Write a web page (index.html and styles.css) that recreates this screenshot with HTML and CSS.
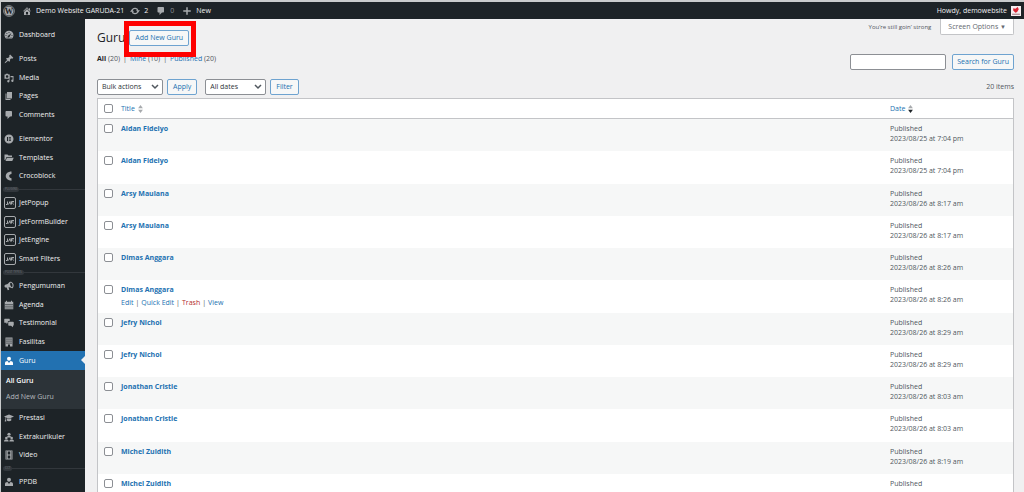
FILE: index.html
```html
<!DOCTYPE html>
<html lang="en">
<head>
  <meta charset="UTF-8" />
  <meta name="viewport" content="width=device-width, initial-scale=1.0"/>
  <title>Guru - Demo Website GARUDA-21</title>
  <link rel="stylesheet" href="styles.css">
</head>
<body>
  <svg class="sprite" aria-hidden="true">
    <symbol id="i-home" viewBox="0 0 20 20"><path d="M16 8.500l1.530 1.530-1.060 1.060L10 4.600l-6.470 6.490-1.060-1.060L10 2.500l4 4v-2h2v4zm-6-2.460l6 5.990V18H4v-5.970zM12 17v-5H8v5h4z"/></symbol>
    <symbol id="i-update" viewBox="0 0 20 20"><path d="M4.500 8a6 6 0 0 1 11.300 1.200M15.500 12a6 6 0 0 1-11.300-1.200" fill="none" stroke="currentColor" stroke-width="2.500"/><path d="M12 8.500h8L16 13.500zM0 11.500h8L4 6.500z"/></symbol>
    <symbol id="i-comment" viewBox="0 0 20 20"><path d="M5 2h9c1.100 0 2 .9 2 2v7c0 1.100-.9 2-2 2h-2l-5 5v-5H5c-1.100 0-2-.9-2-2V4c0-1.100.9-2 2-2z"/></symbol>
    <symbol id="i-plus" viewBox="0 0 20 20"><path d="M8.500 2.500h3v6h6v3h-6v6h-3v-6h-6v-3h6z"/></symbol>
    <symbol id="i-dashboard" viewBox="0 0 20 20"><path fill-rule="evenodd" d="M3.800 17A9 9 0 1 1 16.200 17zM10 4a1 1 0 1 0 0 2 1 1 0 0 0 0-2zM5.800 6a1 1 0 1 0 0 2 1 1 0 0 0 0-2zM4 10a1 1 0 1 0 0 2 1 1 0 0 0 0-2zM16 10a1 1 0 1 0 0 2 1 1 0 0 0 0-2zM14.800 6L9 11.200a2 2 0 1 0 2.400 2zM5 14.500h2v1H5zM13 14.500h2v1h-2z"/></symbol>
    <symbol id="i-pin" viewBox="0 0 20 20"><path d="M10.440 3.020l1.820-1.820 6.360 6.350-1.830 1.820c-1.050-.68-2.480-.57-3.410.36l-.75.75c-.92.93-1.040 2.350-.35 3.410l-1.830 1.820-2.410-2.410-2.800 2.790c-.42.42-3.380 2.710-3.800 2.290s1.860-3.390 2.280-3.810l2.790-2.790L4.100 9.360l1.830-1.820c1.050.69 2.480.57 3.400-.36l.75-.75c.93-.92 1.050-2.350.36-3.410z"/></symbol>
    <symbol id="i-media" viewBox="0 0 20 20"><path fill-rule="evenodd" d="M1 3h2l1-1.500h4L9 3h2.500v8.500H1zM6.200 4.500a2.600 2.600 0 1 0 0 5.200 2.600 2.600 0 0 0 0-5.200z"/><path d="M13 6h6v9.500a2.300 2.300 0 1 1-1.800-2.200V8.500H13zM12 12h-1v4.500a2.300 2.300 0 1 1-1.700-2.200V13H12z"/></symbol>
    <symbol id="i-pages" viewBox="0 0 20 20"><path d="M6 15V2h10v13H6zm-1 1h8v2H3V5h2v11z"/></symbol>
    <symbol id="i-elementor" viewBox="0 0 20 20"><path fill-rule="evenodd" d="M10 1a9 9 0 1 0 0 18 9 9 0 0 0 0-18zM6 6h2v8H6zm3.500 0H14v1.600H9.500zm0 3.200H14v1.600H9.500zm0 3.200H14V14H9.500z"/></symbol>
    <symbol id="i-folder" viewBox="0 0 20 20"><path d="M1 3h6l2 2h7v3H5L2.500 14H1zM5.800 9.300H19.500L16.500 16H3z"/></symbol>
    <symbol id="i-croco" viewBox="0 0 20 20"><path d="M15 1v5c-3 .3-4.600 1.700-4.600 4.200s1.600 4 4.600 4.400v5C8 19 3.500 15.500 3.500 10.200S8 1.200 15 1z"/></symbol>
    <symbol id="i-jet" viewBox="0 0 24 24"><rect x="1" y="1" width="22" height="22" rx="3" fill="none" stroke="currentColor" stroke-width="2"/><path d="M4 15h3V9m2 6l3-6 1 6m2 0V9h5m-5 3h4m0 3h1" fill="none" stroke="currentColor" stroke-width="2"/></symbol>
    <symbol id="i-megaphone" viewBox="0 0 20 20"><path d="M18 4.500c2 3 1.500 8.500-1 10-1 .5-2 0-3-.8-1.500-1-3-1.500-5-1.200l1.500 5-3 1-2.200-5.500C3 13.500 1 12.500 1 10.500S2 7.500 4 7c3-.8 5-2 6.500-4.500C12 .5 16 1.200 18 4.500zm-5-.8c-1.400 1.500-.7 6 1.500 8 1.200 1 2.400.3 2.600-1.700.3-3.500-2-7.600-4.100-6.300z"/></symbol>
    <symbol id="i-calendar" viewBox="0 0 20 20"><path fill-rule="evenodd" d="M1.500 3.500H4V1.500h2v2h8v-2h2v2h2.500v15h-17zM3 8v2h2V8zm4 0v2h2V8zm4 0v2h2V8zm4 0v2h2V8zM3 11.500v2h2v-2zm4 0v2h2v-2zm4 0v2h2v-2zm4 0v2h2v-2zM3 15v2h2v-2zm4 0v2h2v-2zm4 0v2h2v-2zm4 0v2h2v-2z"/></symbol>
    <symbol id="i-chat" viewBox="0 0 20 20"><path d="M1.500 1.500h9a1 1 0 0 1 1 1V6H9.500a2 2 0 0 0-2 2v2L5 12V9.500H1.500a1 1 0 0 1-1-1v-6a1 1 0 0 1 1-1zM10 7.500h8a1.500 1.500 0 0 1 1.500 1.500v5a1.500 1.500 0 0 1-1.500 1.500v3l-4-3h-4A1.500 1.500 0 0 1 8.500 14V9A1.500 1.500 0 0 1 10 7.500z"/></symbol>
    <symbol id="i-building" viewBox="0 0 20 20"><path fill-rule="evenodd" d="M3 1h14v18h-5v-4H8v4H3zM5 3v2.500h2V3zm4 0v2.500h2V3zm4 0v2.500h2V3zM5 7v2.500h2V7zm4 0v2.500h2V7zm4 0v2.500h2V7zM5 11v2.500h2V11zm4 0v2.500h2V11zm4 0v2.500h2V11z"/></symbol>
    <symbol id="i-person" viewBox="0 0 20 20"><circle cx="10" cy="5.500" r="4"/><path d="M2 18v-4c0-2.500 2-4 5-4l3 4 3-4c3 0 5 1.500 5 4v4z"/></symbol>
    <symbol id="i-cap" viewBox="0 0 20 20"><path d="M10 3L0 7l3 1.300v5.200H2L1.500 17h3L4 13.500V8.800L10 11.500 20 7zM5.500 10.500L10 12.600l4.500-2.100V15c-2.500 2-6.500 2-9 0z"/></symbol>
    <symbol id="i-groups" viewBox="0 0 20 20"><circle cx="10" cy="4.500" r="3.200"/><path d="M5.500 11c0-2.500 2-3.200 4.500-3.200s4.500.7 4.500 3.200z"/><circle cx="4.700" cy="12" r="2.600"/><circle cx="15.300" cy="12" r="2.600"/><path d="M0 19c0-3 2-4 4.700-4s4.600 1 4.600 4zM10.700 19c0-3 2-4 4.600-4S20 16 20 19z"/></symbol>
    <symbol id="i-video" viewBox="0 0 20 20"><path fill-rule="evenodd" d="M3 1h14v18H3zM4.500 3v2H6V3zm0 4v2H6V7zm0 4v2H6v-2zm0 4v2H6v-2zM14 3v2h1.500V3zm0 4v2h1.500V7zm0 4v2h1.500v-2zm0 4v2h1.500v-2zM7.500 3v6h5V3zm0 8v6h5v-6z"/></symbol>
  </svg>

  <div class="page">
    <header class="adminbar">
      <a href="#" class="wp-logo" aria-label="WordPress">
        <svg class="icon" viewBox="0 0 20 20"><circle cx="10" cy="10" r="9" fill="none" stroke="currentColor" stroke-width="1.200"/><circle cx="10" cy="10" r="7.500"/><text x="10" y="15" text-anchor="middle" class="logo-letter">W</text></svg>
      </a>
      <a href="#" class="site"><svg class="icon"><use href="#i-home"/></svg>Demo Website GARUDA-21</a>
      <a href="#" class="updates"><svg class="icon"><use href="#i-update"/></svg>2</a>
      <a href="#" class="bar-comments"><svg class="icon"><use href="#i-comment"/></svg><span class="dim">0</span></a>
      <a href="#" class="new"><svg class="icon"><use href="#i-plus"/></svg>New</a>
      <a href="#" class="account">Howdy, demowebsite
        <svg class="avatar" viewBox="0 0 18 18"><path fill="#f6eef0" d="M0 0h18v18H0z"/><path fill="#d92332" d="M4 4l4 1 4-3 2 4-3 5-3 1-4-4z"/><path fill="#8c5961" d="M2 14h14v1.500H2z"/></svg>
      </a>
    </header>

    <div class="layout">
      <nav class="sidebar">
        <ul class="menu">
          <li><a href="#"><svg class="icon"><use href="#i-dashboard"/></svg>Dashboard</a></li>
        </ul>
        <ul class="menu spaced">
          <li><a href="#"><svg class="icon"><use href="#i-pin"/></svg>Posts</a></li>
          <li><a href="#"><svg class="icon"><use href="#i-media"/></svg>Media</a></li>
          <li><a href="#"><svg class="icon"><use href="#i-pages"/></svg>Pages</a></li>
          <li><a href="#"><svg class="icon"><use href="#i-comment"/></svg>Comments</a></li>
        </ul>
        <ul class="menu spaced">
          <li><a href="#"><svg class="icon"><use href="#i-elementor"/></svg>Elementor</a></li>
          <li><a href="#"><svg class="icon"><use href="#i-folder"/></svg>Templates</a></li>
          <li><a href="#"><svg class="icon"><use href="#i-croco"/></svg>Crocoblock</a></li>
        </ul>
        <div class="divider"><span>PLUGINS</span></div>
        <ul class="menu">
          <li><a href="#"><svg class="icon jet"><use href="#i-jet"/></svg>JetPopup</a></li>
          <li><a href="#"><svg class="icon jet"><use href="#i-jet"/></svg>JetFormBuilder</a></li>
          <li><a href="#"><svg class="icon jet"><use href="#i-jet"/></svg>JetEngine</a></li>
          <li><a href="#"><svg class="icon jet"><use href="#i-jet"/></svg>Smart Filters</a></li>
        </ul>
        <div class="divider"><span>POST TYPES</span></div>
        <ul class="menu">
          <li><a href="#"><svg class="icon"><use href="#i-megaphone"/></svg>Pengumuman</a></li>
          <li><a href="#"><svg class="icon"><use href="#i-calendar"/></svg>Agenda</a></li>
          <li><a href="#"><svg class="icon"><use href="#i-chat"/></svg>Testimonial</a></li>
          <li><a href="#"><svg class="icon"><use href="#i-building"/></svg>Fasilitas</a></li>
          <li class="current"><a href="#"><svg class="icon"><use href="#i-person"/></svg>Guru</a></li>
        </ul>
        <ul class="submenu">
          <li class="active"><a href="#">All Guru</a></li>
          <li><a href="#">Add New Guru</a></li>
        </ul>
        <ul class="menu">
          <li><a href="#"><svg class="icon"><use href="#i-cap"/></svg>Prestasi</a></li>
          <li><a href="#"><svg class="icon"><use href="#i-groups"/></svg>Extrakurikuler</a></li>
          <li><a href="#"><svg class="icon"><use href="#i-video"/></svg>Video</a></li>
        </ul>
        <div class="divider"><span>CCT</span></div>
        <ul class="menu">
          <li><a href="#"><svg class="icon"><use href="#i-person"/></svg>PPDB</a></li>
        </ul>
      </nav>

      <main class="content">
        <div class="top">
          <div class="heading">
            <h1>Guru</h1>
            <div class="highlighted">
              <button type="button" class="button">Add New Guru</button>
            </div>
          </div>
          <div class="screen-meta">
            <span class="lyric">You’re still goin’ strong</span>
            <button type="button" class="screen-options">Screen Options <span class="caret">▼</span></button>
          </div>
        </div>

        <div class="filters">
          <div class="views">
            <span><a href="#" class="all">All</a> (20)</span> |
            <span><a href="#">Mine</a> (10)</span> |
            <span><a href="#">Published</a> (20)</span>
          </div>
          <form class="search">
            <input type="search" aria-label="Search Guru">
            <button type="button" class="button">Search for Guru</button>
          </form>
        </div>

        <div class="tablenav">
          <select class="bulk" aria-label="Select bulk action"><option>Bulk actions</option></select>
          <button type="button" class="button">Apply</button>
          <select class="dates" aria-label="Filter by date"><option>All dates</option></select>
          <button type="button" class="button">Filter</button>
          <span class="count">20 items</span>
        </div>

        <table class="list">
          <thead>
            <tr>
              <th class="check"><input type="checkbox" aria-label="Select all"></th>
              <th><a href="#">Title <svg class="sort" viewBox="0 0 6 10"><path d="M3 0l3 4H0zM3 10l3-4H0z"/></svg></a></th>
              <th class="date"><a href="#">Date <svg class="sort" viewBox="0 0 6 10"><path d="M3 0l3 4H0z"/><path class="on" d="M3 10l3-4H0z"/></svg></a></th>
            </tr>
          </thead>
          <tbody>
            <tr>
              <td class="check"><input type="checkbox" aria-label="Select Aidan Fidelyo"></td>
              <td><a href="#" class="name">Aidan Fidelyo</a></td>
              <td class="date">Published<br>2023/08/25 at 7:04 pm</td>
            </tr>
            <tr>
              <td class="check"><input type="checkbox" aria-label="Select Aidan Fidelyo"></td>
              <td><a href="#" class="name">Aidan Fidelyo</a></td>
              <td class="date">Published<br>2023/08/25 at 7:04 pm</td>
            </tr>
            <tr>
              <td class="check"><input type="checkbox" aria-label="Select Arsy Maulana"></td>
              <td><a href="#" class="name">Arsy Maulana</a></td>
              <td class="date">Published<br>2023/08/26 at 8:17 am</td>
            </tr>
            <tr>
              <td class="check"><input type="checkbox" aria-label="Select Arsy Maulana"></td>
              <td><a href="#" class="name">Arsy Maulana</a></td>
              <td class="date">Published<br>2023/08/26 at 8:17 am</td>
            </tr>
            <tr>
              <td class="check"><input type="checkbox" aria-label="Select Dimas Anggara"></td>
              <td><a href="#" class="name">Dimas Anggara</a></td>
              <td class="date">Published<br>2023/08/26 at 8:26 am</td>
            </tr>
            <tr>
              <td class="check"><input type="checkbox" aria-label="Select Dimas Anggara"></td>
              <td>
                <a href="#" class="name">Dimas Anggara</a>
                <div class="row-actions"><a href="#">Edit</a> | <a href="#">Quick Edit</a> | <a href="#" class="trash">Trash</a> | <a href="#">View</a></div>
              </td>
              <td class="date">Published<br>2023/08/26 at 8:26 am</td>
            </tr>
            <tr>
              <td class="check"><input type="checkbox" aria-label="Select Jefry Nichol"></td>
              <td><a href="#" class="name">Jefry Nichol</a></td>
              <td class="date">Published<br>2023/08/26 at 8:29 am</td>
            </tr>
            <tr>
              <td class="check"><input type="checkbox" aria-label="Select Jefry Nichol"></td>
              <td><a href="#" class="name">Jefry Nichol</a></td>
              <td class="date">Published<br>2023/08/26 at 8:29 am</td>
            </tr>
            <tr>
              <td class="check"><input type="checkbox" aria-label="Select Jonathan Cristie"></td>
              <td><a href="#" class="name">Jonathan Cristie</a></td>
              <td class="date">Published<br>2023/08/26 at 8:03 am</td>
            </tr>
            <tr>
              <td class="check"><input type="checkbox" aria-label="Select Jonathan Cristie"></td>
              <td><a href="#" class="name">Jonathan Cristie</a></td>
              <td class="date">Published<br>2023/08/26 at 8:03 am</td>
            </tr>
            <tr>
              <td class="check"><input type="checkbox" aria-label="Select Michel Zuidith"></td>
              <td><a href="#" class="name">Michel Zuidith</a></td>
              <td class="date">Published<br>2023/08/26 at 8:19 am</td>
            </tr>
            <tr>
              <td class="check"><input type="checkbox" aria-label="Select Michel Zuidith"></td>
              <td><a href="#" class="name">Michel Zuidith</a></td>
              <td class="date">Published</td>
            </tr>
          </tbody>
        </table>
      </main>
    </div>
  </div>
</body>
</html>
```
FILE: styles.css
```css
* {
  box-sizing: border-box;
}

body {
  margin: 0;
  background: #f0f0f1;
  color: #50575e;
  font-family: "Open Sans", "Noto Sans", sans-serif;
  font-size: 7px;
  line-height: 10px;
}

a {
  color: #2271b1;
  text-decoration: none;
}

ul {
  list-style: none;
  margin: 0;
  padding: 0;
}

button,
input,
select {
  font: inherit;
  margin: 0;
}

.sprite {
  display: none;
}

.page {
  display: flex;
  flex-direction: column;
  height: 100vh;
  overflow: hidden;
  border-top: 2px solid #c9cbcc;
  border-left: 1px solid #c9cbcc;
}

.icon {
  width: 10px;
  height: 10px;
  flex: none;
  fill: currentColor;
  color: #a7aaad;
}

/* admin bar */
.adminbar {
  display: flex;
  align-items: center;
  flex: none;
  height: 17px;
  padding: 0 3px 0 2px;
  background: #1d2327;
}

.adminbar a {
  display: flex;
  align-items: center;
  gap: 4px;
  color: #f0f0f1;
}

.wp-logo .icon {
  width: 12px;
  height: 12px;
}

.logo-letter {
  font: bold 14px "Liberation Serif", serif;
  fill: #1d2327;
}

.site {
  margin-left: 7px;
}

.updates {
  margin-left: 6px;
}

.bar-comments,
.new {
  margin-left: 8px;
}

.dim {
  color: #8c8f94;
}

.adminbar .account {
  margin-left: auto;
}

.avatar {
  width: 10px;
  height: 10px;
}

/* sidebar */
.layout {
  display: flex;
  flex: 1;
  min-height: 0;
}

.sidebar {
  flex: none;
  width: 84px;
  padding-top: 7px;
  background: #1d2327;
}

.menu a {
  display: flex;
  align-items: center;
  gap: 5px;
  height: 18px;
  padding-left: 3px;
  color: #f0f0f1;
}

.menu li:nth-child(even) a {
  height: 19px;
}

.menu .jet {
  width: 12px;
  height: 12px;
  margin-right: -2px;
}

.spaced {
  margin-top: 6px;
}

.menu .current a {
  position: relative;
  height: 19px;
  background: #2271b1;
  color: #fff;
}

.current .icon {
  color: #fff;
}

.current a::after {
  content: "";
  position: absolute;
  right: 0;
  top: 5px;
  border: 4px solid transparent;
  border-right-color: #f0f0f1;
  border-left: 0;
}

.submenu {
  padding: 3px 0 4px;
  background: #2c3338;
}

.submenu a {
  display: block;
  padding-left: 5px;
  line-height: 16px;
  color: #b4b9be;
}

.submenu .active a {
  color: #fff;
  font-weight: 600;
}

.divider {
  display: flex;
  align-items: center;
  height: 9px;
  padding-left: 2px;
  color: #6c7177;
  font-size: 3px;
  line-height: 5px;
}

.divider span {
  padding: 0 2px;
  border-radius: 3px;
  background: #32373c;
}

.divider::after {
  content: "";
  flex: 1;
  height: 1px;
  background: #32373c;
}

/* content */
.content {
  flex: 1;
  min-width: 0;
  padding: 0 10px 0 12px;
}

.top {
  display: flex;
  justify-content: space-between;
  align-items: flex-start;
}

.heading {
  display: flex;
  align-items: center;
  gap: 4px;
  padding-top: 10px;
}

h1 {
  margin: 0;
  font-size: 12px;
  font-weight: 400;
  line-height: 18px;
  color: #1d2327;
}

.button {
  height: 16px;
  padding: 0 5px;
  border: 1px solid #6ea3d0;
  border-radius: 2px;
  background: #f6f7f7;
  color: #2271b1;
  line-height: 14px;
  white-space: nowrap;
}

/* red frame laid over the add button */
.highlighted {
  position: relative;
}

.highlighted::after {
  content: "";
  position: absolute;
  inset: -9px -7px -11px -5px;
  border: 5px solid #fe0000;
}

.screen-meta {
  display: flex;
  gap: 9px;
}

.lyric {
  padding-top: 3px;
  font-size: 6px;
}

.screen-options {
  height: 16px;
  padding: 0 7px;
  border: 1px solid #c3c4c7;
  border-top: 0;
  border-radius: 0 0 2px 2px;
  background: #fff;
  color: #646970;
}

.caret {
  font-size: 6px;
}

.filters {
  display: flex;
  justify-content: space-between;
  margin-top: 7px;
}

.views {
  display: flex;
  gap: 3px;
}

.views .all {
  color: #1d2327;
  font-weight: 700;
}

.search {
  display: flex;
  gap: 6px;
}

.search .button {
  padding: 0 4px;
}

.search input {
  width: 96px;
  height: 16px;
  border: 1px solid #8c8f94;
  border-radius: 2px;
  background: #fff;
}

.tablenav {
  display: flex;
  align-items: center;
  gap: 4px;
  margin: 9px 0 3px;
}

select {
  appearance: none;
  height: 16px;
  padding: 0 4px;
  border: 1px solid #8c8f94;
  border-radius: 2px;
  background: #fff url("data:image/svg+xml,%3Csvg width='8' height='6' viewBox='0 0 8 6' xmlns='http://www.w3.org/2000/svg'%3E%3Cpath d='M1 1l3 3 3-3' stroke='%2350575e' stroke-width='1.5' fill='none'/%3E%3C/svg%3E") no-repeat right 3px center;
  color: #2c3338;
}

.bulk {
  width: 66px;
}

.dates {
  width: 61px;
  margin-left: 4px;
}

.count {
  margin-left: auto;
}

/* posts table */
.list {
  width: 100%;
  border: 1px solid #c3c4c7;
  border-spacing: 0;
  table-layout: fixed;
  background: #fff;
}

.list th,
.list td {
  padding: 0;
  font-weight: 400;
  text-align: left;
  vertical-align: top;
}

.list th {
  height: 20px;
  border-bottom: 1px solid #c3c4c7;
  vertical-align: middle;
}

.list td {
  height: 32px;
  padding-top: 5px;
}

.list tr:nth-child(4n + 2) td {
  height: 33px;
}

.list tbody tr:nth-child(odd) {
  background: #f6f7f7;
}

.list .check {
  width: 23px;
  padding-left: 6px;
}

.list .date {
  width: 123px;
}

.list input {
  appearance: none;
  display: block;
  width: 9px;
  height: 9px;
  border: 1px solid #8c8f94;
  border-radius: 2px;
  background: #fff;
}

.list th a {
  display: flex;
  align-items: center;
  gap: 3px;
}

.sort {
  width: 5px;
  height: 8px;
  fill: #a7aaad;
}

.sort .on {
  fill: #1d2327;
}

.name {
  font-weight: 700;
}

.row-actions {
  display: flex;
  gap: 2px;
  margin-top: 3px;
}

.row-actions .trash {
  color: #b32d2e;
}
```
